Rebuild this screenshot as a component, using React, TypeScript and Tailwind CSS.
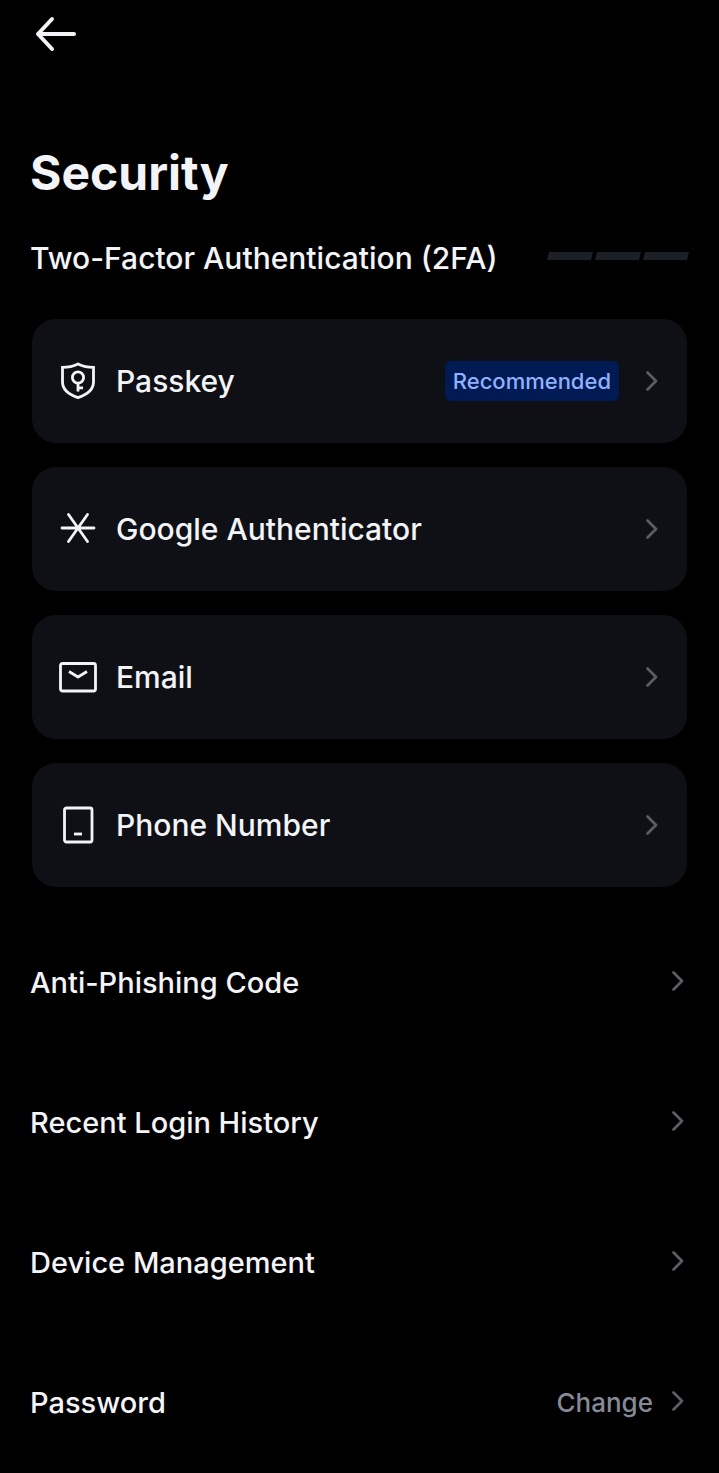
import React from 'react';

const stroke = {
  fill: 'none',
  stroke: 'currentColor',
  strokeLinejoin: 'round',
  'aria-hidden': true,
} as const;

function BackIcon() {
  return (
    <svg {...stroke} className="h-12 w-12" viewBox="0 0 48 48" strokeWidth="4" strokeLinecap="round">
      <path d="M42 24H6M20 9L6 24l14 15" />
    </svg>
  );
}

function ChevronIcon() {
  return (
    <svg {...stroke} className="h-6 w-6 shrink-0 text-[#5a5d66]" viewBox="0 0 24 24" strokeWidth="2.8" strokeLinecap="round">
      <path d="M8.5 3.5L17 12l-8.5 8.5" />
    </svg>
  );
}

function ShieldKeyIcon() {
  return (
    <svg {...stroke} className="h-10 w-10" viewBox="0 0 40 40" strokeWidth="2.8">
      <path strokeLinejoin="miter" d="M20 3c4.500 2.200 9.500 3.400 15.500 3.400V21c0 8-6 12.500-15.500 15.600C10.500 33.500 4.500 29 4.500 21V6.400C10.500 6.400 15.500 5.200 20 3z" />
      <circle cx="20" cy="16.500" r="5.600" />
      <path d="M20 22v8.500M20 26.800h5" />
    </svg>
  );
}

function AsteriskIcon() {
  return (
    <svg {...stroke} className="h-10 w-10" viewBox="0 0 40 40" strokeWidth="2.8" strokeLinecap="round">
      <path d="M4 19h32M10.500 5.500l19 27M29.500 5.500l-19 27" />
    </svg>
  );
}

function MailIcon() {
  return (
    <svg {...stroke} className="h-10 w-10" viewBox="0 0 40 40" strokeWidth="2.8">
      <rect x="2.500" y="6.500" width="35" height="27.500" rx="2" />
      <path d="M11 14.500l9 5.500 9-5.500" />
    </svg>
  );
}

function PhoneIcon() {
  return (
    <svg {...stroke} className="h-10 w-10" viewBox="0 0 40 40" strokeWidth="2.8">
      <rect x="6.500" y="3" width="27.500" height="34" rx="2" />
      <path d="M16 29h8" />
    </svg>
  );
}

function StrengthMeter() {
  return (
    <svg className="mb-1 h-2 w-[142px] shrink-0 text-[#1c1f26]" viewBox="0 0 142 8" fill="currentColor" aria-hidden="true">
      <path d="M2 0h44l-2 8H0zM50 0h44l-2 8H48zM98 0h44l-2 8H96z" />
    </svg>
  );
}

const methods = [
  { label: 'Passkey', icon: ShieldKeyIcon, tag: 'Recommended' },
  { label: 'Google Authenticator', icon: AsteriskIcon },
  { label: 'Email', icon: MailIcon },
  { label: 'Phone Number', icon: PhoneIcon },
];

const settings = [
  { label: 'Anti-Phishing Code' },
  { label: 'Recent Login History' },
  { label: 'Device Management' },
  { label: 'Password', action: 'Change' },
];

export default function App() {
  return (
    <div className="min-h-screen bg-black font-['Inter',sans-serif] text-[#f3f4f7]">
      <header className="px-8 pt-2.5">
        <button type="button" aria-label="Back" className="block cursor-pointer">
          <BackIcon />
        </button>
      </header>

      <main className="px-[30px] pt-21">
        <h1 className="text-5xl leading-[62px] font-bold">Security</h1>

        <div className="mt-[34px] flex items-center justify-between">
          <h2 className="text-[30px] leading-10 font-medium">Two-Factor Authentication (2FA)</h2>
          <StrengthMeter />
        </div>

        <ul className="mx-0.5 mt-[41px] flex flex-col gap-6">
          {methods.map(({ label, icon: Icon, tag }) => (
            <li key={label}>
              <button type="button" className="flex h-31 w-full cursor-pointer items-center rounded-3xl bg-[#0f1015] pr-6 pl-[26px] text-left">
                <Icon />
                <span className="ml-[18px] flex-1 text-[30px] leading-10 font-medium">{label}</span>
                {tag && (
                  <span className="mr-5 rounded-md bg-[#001a53] px-2 text-[22px] leading-10 font-medium text-[#91b1ff]">{tag}</span>
                )}
                <ChevronIcon />
              </button>
            </li>
          ))}
        </ul>

        {/* Account settings */}
        <ul className="mt-6">
          {settings.map(({ label, action }) => (
            <li key={label}>
              <button type="button" className="flex h-35 w-full cursor-pointer items-center text-left">
                <span className="flex-1 pt-1 text-[29px] leading-10 font-medium">{label}</span>
                {action && <span className="mr-3 pt-1 text-[26px] leading-10 font-medium text-[#848a97]">{action}</span>}
                <ChevronIcon />
              </button>
            </li>
          ))}
        </ul>
      </main>
    </div>
  );
}
